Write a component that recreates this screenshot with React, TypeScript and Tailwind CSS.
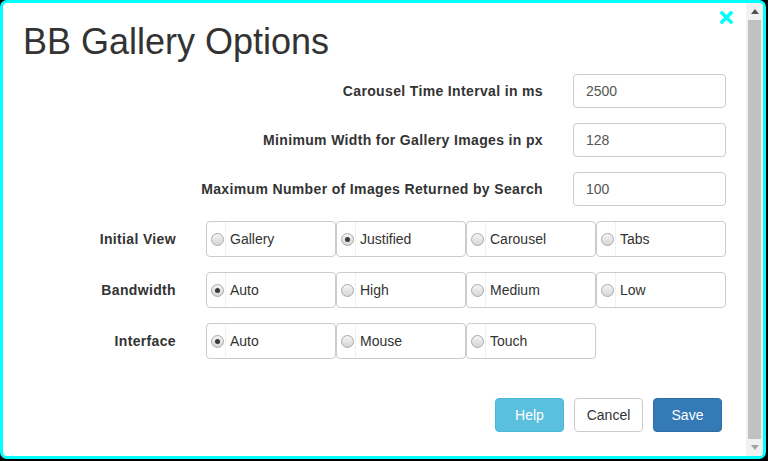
import React from "react";

function Radio({ checked }: { checked?: boolean }) {
  return (
    <span className="relative flex h-[13px] w-[13px] items-center justify-center rounded-full border border-[#a9a9a9] bg-gradient-to-b from-[#f4f4f4] to-[#d6d6d6]">
      {checked && <span className="h-[5px] w-[5px] rounded-full bg-[#3a3a3a]" />}
    </span>
  );
}

function RadioBox({ label, checked }: { label: string; checked?: boolean }) {
  return (
    <div className="flex h-[36px] w-[130px] items-stretch rounded-[4px] border border-[#cccccc] bg-white">
      <div className="flex w-[19px] items-center justify-end border-r border-[#f1f1f1] pr-[1px]">
        <Radio checked={checked} />
      </div>
      <div className="flex items-center pl-[4px] text-[14px] text-[#333333]">{label}</div>
    </div>
  );
}

function InputRow({ label, value }: { label: string; value: string }) {
  return (
    <div className="flex h-[34px] items-center">
      <div className="flex-1 pr-[30px] text-right text-[14px] font-bold tracking-[0.35px] text-[#333333]">{label}</div>
      <div className="flex h-[34px] w-[153px] items-center rounded-[4px] border border-[#cccccc] px-[12px] text-[14px] text-[#555555]">
        {value}
      </div>
    </div>
  );
}

function RadioRow({ label, options, selected }: { label: string; options: string[]; selected: string }) {
  return (
    <div className="flex h-[36px] items-center">
      <div className="w-[153px] text-right text-[14px] font-bold tracking-[0.35px] text-[#333333]">{label}</div>
      <div className="ml-[30px] flex">
        {options.map((o) => (
          <RadioBox key={o} label={o} checked={o === selected} />
        ))}
      </div>
    </div>
  );
}

export default function App() {
  return (
    <div className="h-[461px] w-[768px] bg-black" style={{ fontFamily: '"Liberation Sans", Arial, sans-serif' }}>
      <div className="flex h-[459px] w-[766px] overflow-hidden rounded-[7px] border-[3px] border-[#00ffff] bg-white">
        <div className="relative flex-1 px-[20px] pt-[19px]">
          <svg className="absolute right-[13px] top-[8px]" width="13" height="13" viewBox="0 0 13 13">
            <path d="M2 2 L11 11 M11 2 L2 11" stroke="#00ffff" strokeWidth="3.6" strokeLinecap="square" />
          </svg>
          <h1 className="h-[40px] text-[36px] leading-[40px] text-[#333333]">BB Gallery Options</h1>
          <div className="mt-[12px] flex flex-col gap-[15px]">
            <InputRow label="Carousel Time Interval in ms" value="2500" />
            <InputRow label="Minimum Width for Gallery Images in px" value="128" />
            <InputRow label="Maximum Number of Images Returned by Search" value="100" />
            <RadioRow label="Initial View" options={["Gallery", "Justified", "Carousel", "Tabs"]} selected="Justified" />
            <RadioRow label="Bandwidth" options={["Auto", "High", "Medium", "Low"]} selected="Auto" />
            <RadioRow label="Interface" options={["Auto", "Mouse", "Touch"]} selected="Auto" />
          </div>
          <div className="mt-[39px] flex justify-end gap-[10px] pr-[4px]">
            <button className="h-[34px] w-[69px] rounded-[4px] border border-[#46b8da] bg-[#5bc0de] text-[14px] text-white">Help</button>
            <button className="h-[34px] w-[69px] rounded-[4px] border border-[#cccccc] bg-white text-[14px] text-[#333333]">Cancel</button>
            <button className="h-[34px] w-[69px] rounded-[4px] border border-[#2e6da4] bg-[#337ab7] text-[14px] text-white">Save</button>
          </div>
        </div>
        <div className="flex w-[17px] flex-col items-center bg-[#f1f1f1]">
          <div className="flex h-[17px] w-full items-center justify-center">
            <svg width="8" height="5" viewBox="0 0 8 5"><path d="M0 5 L4 0 L8 5 Z" fill="#505050" /></svg>
          </div>
          <div className="w-[13px] flex-1 bg-[#c1c1c1]" />
          <div className="flex h-[17px] w-full items-center justify-center">
            <svg width="8" height="5" viewBox="0 0 8 5"><path d="M0 0 L4 5 L8 0 Z" fill="#a3a3a3" /></svg>
          </div>
        </div>
      </div>
    </div>
  );
}
